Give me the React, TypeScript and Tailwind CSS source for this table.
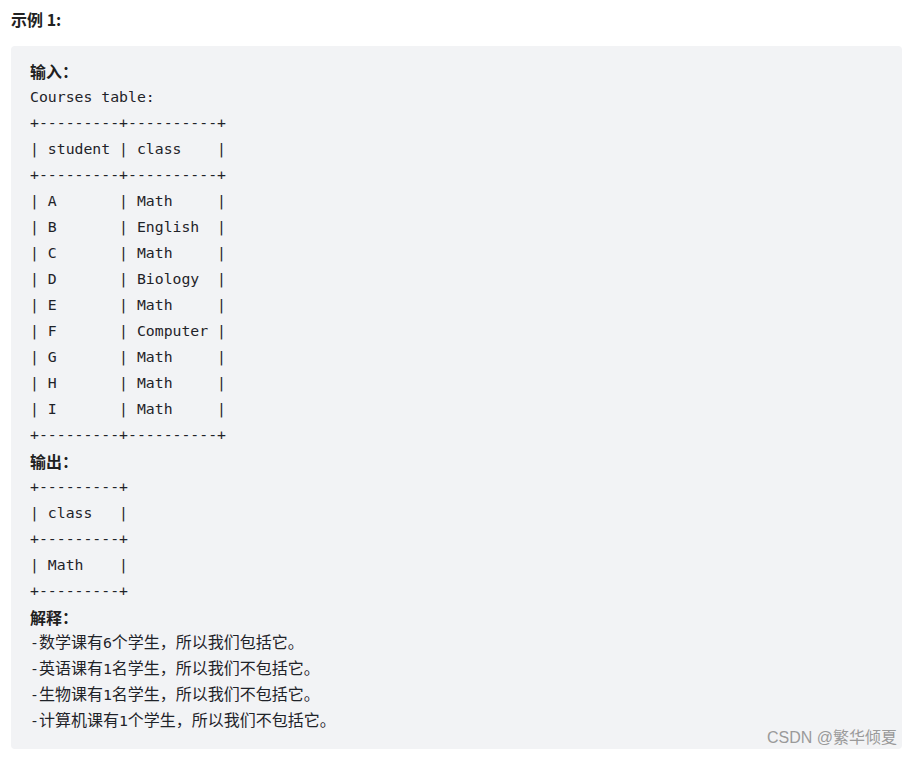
import React from "react";

const mono = { fontFamily: '"DejaVu Sans Mono", "Noto Sans CJK SC", monospace' };

const tableLines = [
  "Courses table:",
  "+---------+----------+",
  "| student | class    |",
  "+---------+----------+",
  "| A       | Math     |",
  "| B       | English  |",
  "| C       | Math     |",
  "| D       | Biology  |",
  "| E       | Math     |",
  "| F       | Computer |",
  "| G       | Math     |",
  "| H       | Math     |",
  "| I       | Math     |",
  "+---------+----------+",
];

const outLines = [
  "+---------+",
  "| class   |",
  "+---------+",
  "| Math    |",
  "+---------+",
];

function Label({ children }: { children: React.ReactNode }) {
  return (
    <div className="h-[26px] font-bold text-[16px] leading-[26px] text-[#1f1f1f] font-['Noto_Sans_CJK_SC',sans-serif]">
      {children}
    </div>
  );
}

function Cn({ children }: { children: React.ReactNode }) {
  return <span className="text-[16px] leading-[20px] font-['Noto_Sans_CJK_SC',sans-serif]">{children}</span>;
}

export default function App() {
  return (
    <div className="relative w-[912px] h-[757px] bg-white">
      <div className="pl-[11px] pt-[7px] h-[46px] font-bold text-[16px] leading-[24px] text-[#222] font-['Noto_Sans_CJK_SC',sans-serif]">
        示例 1:
      </div>
      <div className="mx-[11px] w-[891px] rounded bg-[#f2f3f5] pl-[19px] pt-3 pb-[15px] text-[#1f2329]">
        <Label>输入：</Label>
        <div className="whitespace-pre text-[14.8px] leading-[26px]" style={mono}>
          {tableLines.map((l, i) => (
            <div key={i} className="h-[26px]">{l}</div>
          ))}
        </div>
        <Label>输出：</Label>
        <div className="whitespace-pre text-[14.8px] leading-[26px]" style={mono}>
          {outLines.map((l, i) => (
            <div key={i} className="h-[26px]">{l}</div>
          ))}
        </div>
        <Label>解释：</Label>
        <div className="whitespace-pre text-[14.8px] leading-[26px]" style={mono}>
          <div className="h-[26px]">-<Cn>数学课有</Cn>6<Cn>个学生，所以我们包括它。</Cn></div>
          <div className="h-[26px]">-<Cn>英语课有</Cn>1<Cn>名学生，所以我们不包括它。</Cn></div>
          <div className="h-[26px]">-<Cn>生物课有</Cn>1<Cn>名学生，所以我们不包括它。</Cn></div>
          <div className="h-[26px]">-<Cn>计算机课有</Cn>1<Cn>个学生，所以我们不包括它。</Cn></div>
        </div>
      </div>
      <div className="absolute right-[15px] top-[727px] text-[16px] leading-[22px] text-[#9a9a9a] font-['Liberation_Sans','Noto_Sans_CJK_SC',sans-serif]">
        CSDN @繁华倾夏
      </div>
    </div>
  );
}
